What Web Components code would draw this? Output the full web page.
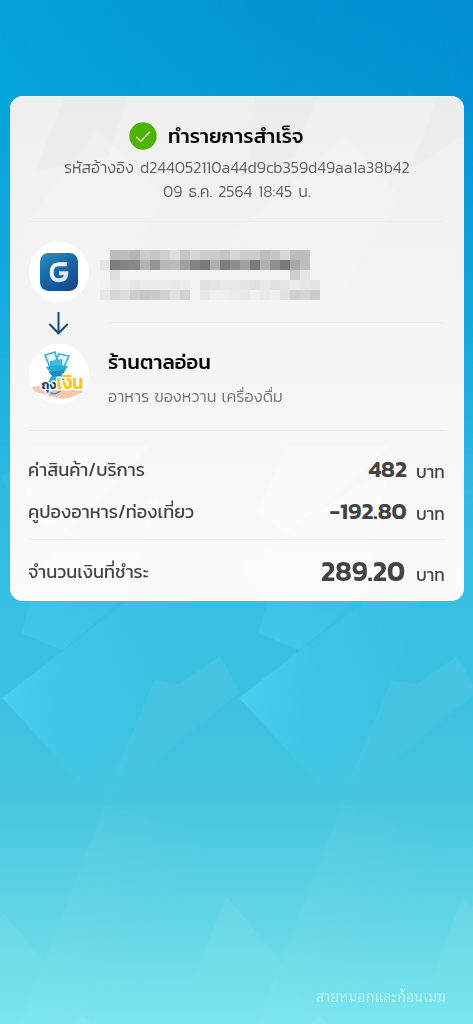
<!DOCTYPE html>
<html lang="th">
<head>
<meta charset="utf-8">
<title>ทำรายการสำเร็จ</title>
<style>
html,body{margin:0;height:100%}
body{font-family:Kanit,Prompt,"Noto Sans Thai","Noto Sans Thai Looped","Open Sans","Noto Sans",sans-serif;overflow:hidden}
.wm{font-family:"Noto Sans Thai Looped",Loma,Garuda,Sarabun,"Noto Serif Thai","Liberation Serif",serif}
</style>
</head>
<body>
<slip-page>
  <slip-card>
    <slip-head></slip-head>
    <slip-parties></slip-parties>
    <slip-row top="17" label="ค่าสินค้า/บริการ" lw="117" amount="482" aw="38" size="23" h="42" ulh="47"></slip-row>
    <slip-row top="0" label="คูปองอาหาร/ท่องเที่ยว" lw="166" amount="-192.80" aw="77" size="23" h="49" ulh="47"></slip-row>
    <slip-row top="10" label="จำนวนเงินที่ชำระ" lw="121" amount="289.20" aw="84" size="28" h="48" ulh="49" line></slip-row>
  </slip-card>
  <fit-text class="wm" slot="mark" w="130" size="15" color="#b4f2f7" lh="20">สายหมอกและก้อนเมฆ</fit-text>
</slip-page>
<script>
const make=(name,html,setup)=>customElements.define(name,class extends HTMLElement{
  connectedCallback(){
    if(this.shadowRoot)return;
    const root=this.attachShadow({mode:'open'});
    root.innerHTML=typeof html==='function'?html(this):html;
    if(setup)setup(this,root);
  }
});

/* One line of text, condensed or widened to a given width. */
make('fit-text',el=>`<style>
:host{display:block;width:${el.getAttribute('w')}px;height:${el.getAttribute('lh')}px;flex:none;color:${el.getAttribute('color')||'#444'}}
span{display:inline-block;white-space:nowrap;transform-origin:0 50%;font-size:${el.getAttribute('size')}px;line-height:${el.getAttribute('lh')}px;font-weight:${el.getAttribute('weight')||400};word-spacing:${el.getAttribute('ws')||0}px}
</style><span><slot></slot></span>`,(el,root)=>{
  const s=root.querySelector('span');
  const w=s.offsetWidth;
  if(w)s.style.transform=`scaleX(${el.getAttribute('w')/w})`;
});

/* Faceted background; the facets repeat every 237px. */
make('facet-layer',el=>`<style>:host{display:block}svg{display:block;width:100%;height:100%}</style>
<svg viewBox="0 0 473 1024" preserveAspectRatio="none">
<defs>
<linearGradient id="a" x1="0" y1=".5" x2=".9" y2=".7"><stop offset="0" stop-color="#52dcf4" stop-opacity=".6"/><stop offset=".4" stop-color="#40cdf0" stop-opacity=".35"/><stop offset="1" stop-color="#40cdf0" stop-opacity=".05"/></linearGradient>
<linearGradient id="h" x1="0" y1="1" x2=".8" y2="0"><stop offset="0" stop-color="#43d0f4" stop-opacity=".6"/><stop offset="1" stop-color="#43d0f4" stop-opacity=".1"/></linearGradient>
<linearGradient id="b" x1="0" y1="0" x2="0" y2="1"><stop offset="0" stop-color="#fff" stop-opacity=".07"/><stop offset="1" stop-color="#fff" stop-opacity="0"/></linearGradient>
<linearGradient id="c" x1="0" y1="0" x2=".8" y2=".4"><stop offset="0" stop-color="#fff" stop-opacity=".06"/><stop offset="1" stop-color="#fff" stop-opacity="0"/></linearGradient>
<g id="f">
<path fill="url(#h)" d="M34 590L21 633 62 650 83 634 130 590z"/>
<path fill="url(#a)" d="M2 698L83 635 142 590H190L155 680 112 800 80 783 17 714z"/>
<path fill="url(#b)" d="M155 680L180 684 220 656 240 692 130 783 104 800z"/>
<path fill="url(#c)" d="M105 805L175 824 235 870V1024H20z"/>
<path fill="url(#b)" d="M226 896L282 963 258 1024H177z"/>
<path fill="#fff" fill-opacity=".06" d="M72 1024L83 1016 91 1024z"/>
<path fill="url(#c)" d="M0 475L21 513 90 535 120 440z"/>
</g></defs>
<use href="#f" x="-237"/><use href="#f"/><use href="#f" x="237"/></svg>`);

make('slip-page',`<style>
:host{display:grid;grid-template-rows:96px 505px 1fr;width:473px;height:1024px;position:relative;overflow:hidden;
background:linear-gradient(#0293d5 0,#0499d8 96px,#18aadd 300px,#2eb9e1 480px,#38bfe3 610px,#3ec2df 730px,#49c8df 810px,#5dd3e4 900px,#6edde9 970px,#7be6f0 1024px)}
:host::before{content:"";position:absolute;inset:0 0 auto 0;height:500px;background:linear-gradient(95deg,rgba(8,182,222,.42),rgba(4,155,215,.1) 55%,rgba(0,128,205,.3));mask:linear-gradient(#000 90px,transparent)}
facet-layer{position:absolute;inset:0;mask:linear-gradient(transparent 90px,rgba(0,0,0,.35) 300px,#000 560px)}
.card{grid-row:2;position:relative;padding-left:9.5px}
.mark{grid-row:3;display:flex;justify-content:flex-end;align-items:flex-end;padding:0 27px 22px 0;position:relative}
</style><facet-layer></facet-layer><div class="card"><slot></slot></div><div class="mark"><slot name="mark"></slot></div>`);

make('slip-card',`<style>
:host{display:flex;flex-direction:column;box-sizing:border-box;width:454px;height:505px;border-radius:13px;padding:0 19px 0 18.5px;overflow:hidden;position:relative;
background:linear-gradient(#efeff0,#f3f3f4 180px,#f6f6f6 320px,#fbfbfb 480px);box-shadow:inset 0 1px #e4f8fd,inset 0 0 1px #dff7fc}
svg{position:absolute;inset:0}
.c{position:relative;display:flex;flex-direction:column}
</style>
<svg width="454" height="505"><g fill="#dcdcdf" opacity=".14"><path d="M55 1H117L99 60 25 75zM245 0H307L285 60 240 75zM428 0H454V38L400 75z" /></g>
<g fill="#fff" opacity=".14"><path d="M87 33L155 100 95 200 0 150zM335 40L390 100 330 200 220 140z"/></g>
<g fill="#fff" opacity=".3"><path d="M24 350L11 417 55 437 140 350zM276 350L247 417 280 440 380 350zM0 500L65 440 150 400 115 505zM232 470L300 420 380 370 350 505H255z"/></g></svg>
<div class="c"><slot></slot></div>`);

make('slip-head',`<style>
:host{display:flex;flex-direction:column;align-items:center;height:126px;box-sizing:border-box;padding-top:25px;border-bottom:1px solid #ececee}
.t{display:flex;height:30px;width:214px;align-items:center;gap:11px}
svg{flex:none}
.r{margin-top:4px;margin-left:1px}.d{margin-left:1px}
</style>
<div class="t"><svg width="28" height="28" viewBox="0 0 28 28"><circle cx="14" cy="14" r="13.7" fill="#4cb400"/><path d="M7.3 14.8l4.5 4.5 9.2-9.6" fill="none" stroke="#e6ffd8" stroke-width="1.3"/></svg>
<fit-text w="136" size="20" weight="500" color="#070707" lh="30">ทำรายการสำเร็จ</fit-text></div>
<div class="r"><fit-text w="346" size="16.5" color="#5f5f61" lh="24" weight="300" ws="2.5">รหัสอ้างอิง d244052110a44d9cb359d49aa1a38b42</fit-text></div>
<div class="d"><fit-text w="147" size="16.5" color="#5f5f61" lh="25" weight="300" ws="2.5">09 ธ.ค. 2564 18:45 น.</fit-text></div>`);

const cells=[
'-- bd bd b5 cc c6 d0 df c6 d6 cc cc c4 d6 cc cc bd c6 d8 bd bd --',
'e5 7d 85 88 b3 94 b9 bb a0 84 7a b0 7d 8e a0 7a b0 90 7a a8 bd --',
'-- dd -- -- -- -- -- -- -- -- -- -- -- -- -- -- -- -- -- cf e5 --',
'f1 e8 ee e5 ea ea ea e9 ec -- e0 e4 e8 e8 e4 e0 e8 e2 e6 ec e6 e4',
'e7 d7 dc ce c6 ca d2 e0 d2 -- e8 ef ee ec e8 ef ea ef e0 d0 d4 cc'];
make('pixel-mask',()=>`<style>:host{display:block;width:220px;height:50px}svg{display:block}</style><svg width="220" height="50" shape-rendering="crispEdges">${
 cells.map((r,y)=>r.split(' ').map((c,x)=>c==='--'?'':`<rect x="${x*10}" y="${y*10}" width="10" height="10" fill="#${c+c+c}"/>`).join('')).join('')}</svg>`);

make('g-logo',`<style>:host{display:grid;place-items:center;width:60px;height:60px;border-radius:50%;background:#fff}svg{display:block}</style>
<svg width="38" height="38" viewBox="0 0 38 38"><defs><linearGradient id="g" x1="0" y1="0" x2=".7" y2="1"><stop stop-color="#2a91bd"/><stop offset=".55" stop-color="#1865a6"/><stop offset="1" stop-color="#164b8d"/></linearGradient><linearGradient id="w" x1="0" y1="0" x2="1" y2="1"><stop stop-color="#fff"/><stop offset="1" stop-color="#cfe0f5"/></linearGradient></defs>
<rect width="38" height="38" rx="8.5" fill="url(#g)"/><path d="M27 11.2H19.5C14 11.2 11.7 14 11.7 19.2C11.7 24.8 14 27.2 19.3 27.2C24 27.2 26.3 25.2 26.3 20.3H19" fill="none" stroke="url(#w)" stroke-width="4"/></svg>`);

make('bag-logo',`<style>:host{display:block;width:60px;height:60px;border-radius:50%;background:#fff;overflow:hidden}svg{display:block}
text{font-family:Kanit,Prompt,"Noto Sans Thai","Open Sans",sans-serif;font-weight:600;paint-order:stroke;stroke:#fff;stroke-linejoin:round}</style>
<svg width="60" height="60" viewBox="0 0 60 60">
<path d="M2 43C10 42 19 41 27 44C35 48 43 46 53 44L54 48C44 53 35 57 25 53L3 47z" fill="#f8c5ae"/>
<path d="M16 11L26 8 30 23 22 26z M30 10L40 12 33 27 24 23z" fill="#e6f7fd" stroke="#39b3d8" stroke-width="1.7"/>
<path d="M21 17L33 15 34 25H21z" fill="#43bce0"/>
<path d="M17 23L26 21 39 22 34 30 37 40Q28 45 18 40L23 31z" fill="#29acd7"/>
<path d="M20 28L36 26 34 31Q27 34 22 31z" fill="#1b8dbd"/>
<path d="M18 46Q25 54 33 45" fill="none" stroke="#3498ba" stroke-width="1.5"/>
<text x="12.5" y="44.5" font-size="13" textLength="15" lengthAdjust="spacingAndGlyphs" fill="#174168" stroke-width="3">ถุง</text>
<text x="27.5" y="44.5" font-size="19" textLength="27" lengthAdjust="spacingAndGlyphs" fill="#f7c51e" stroke-width="3">เงิน</text></svg>`);

make('slip-parties',`<style>
:host{display:grid;grid-template-columns:60px 1fr;column-gap:11.5px;height:209px;box-sizing:border-box;padding:20px 0 0 .5px;border-bottom:1px solid #ececee}
.l{display:flex;flex-direction:column;height:170px}
.arrow{display:block;margin:6px 0 7px 18px;flex:none}
.r{display:flex;flex-direction:column}
pixel-mask{margin-top:8px}
.hr{height:1px;background:#ededef;margin:22px 0 0 7px;flex:none}
.n{margin:24.5px 0 0 7.5px}.s{margin:8px 0 0 7.5px}
g-logo,bag-logo{flex:none}
</style>
<div class="l"><g-logo></g-logo><svg class="arrow" width="24" height="29" viewBox="0 0 24 29"><path d="M11.5 4V25M2.5 16L11.5 25.3 20.7 16" fill="none" stroke="#124d77" stroke-width="2"/></svg><bag-logo></bag-logo></div>
<div class="r"><pixel-mask></pixel-mask><div class="hr"></div>
<div class="n"><fit-text w="103" size="20" weight="500" color="#070707" lh="28">ร้านตาลอ่อน</fit-text></div>
<div class="s"><fit-text w="175" size="16.5" color="#747476" lh="26" weight="300" ws="1.5">อาหาร ของหวาน เครื่องดื่ม</fit-text></div></div>`);

make('slip-row',el=>{const g=n=>el.getAttribute(n);return `<style>
:host{display:flex;box-sizing:border-box;height:${+g('h')+ +g('top')}px;padding-top:${g('top')}px;justify-content:space-between;align-items:flex-start;${el.hasAttribute('line')?'border-top:1px solid #ececee':''}}
.a{display:flex;gap:${el.hasAttribute('line')?11:9}px}
</style><fit-text w="${g('lw')}" size="18" color="#434345" lh="44">${g('label')}</fit-text>
<div class="a"><fit-text w="${g('aw')}" size="${g('size')}" weight="600" color="#434345" lh="43.5">${g('amount')}</fit-text><fit-text w="29" size="18.5" color="#434345" lh="${g('ulh')}">บาท</fit-text></div>`});
</script>
</body>
</html>
